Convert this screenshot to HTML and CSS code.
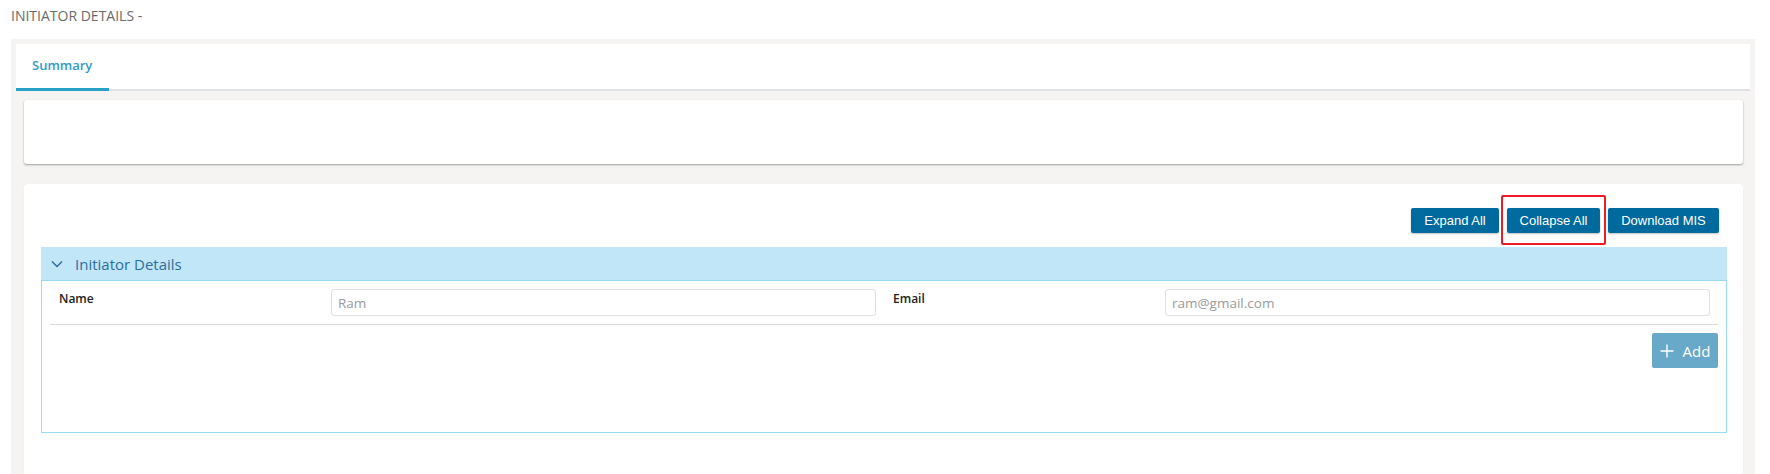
FILE: index.html
```html
<!DOCTYPE html>
<html>
<head>
<meta charset="utf-8">
<link rel="stylesheet" href="styles.css">
</head>
<body>
<div class="page">
  <div class="page-title">INITIATOR DETAILS -</div>
  <div class="panel">
    <div class="tabs">
      <div class="tab active">Summary</div>
    </div>
    <div class="panel-body">
      <div class="card card-summary"></div>
      <div class="card card-main">
        <div class="toolbar">
          <button class="btn btn-expand">Expand All</button>
          <span class="highlight-wrap">
            <button class="btn btn-collapse">Collapse All</button>
            <span class="highlight"></span>
          </span>
          <button class="btn btn-download">Download MIS</button>
        </div>
        <div class="accordion">
          <div class="acc-header">
            <svg class="chevron" width="12" height="8" viewBox="0 0 12 8"><path d="M1 1.5 L6 6.5 L11 1.5" fill="none" stroke="#2d6e9b" stroke-width="1.5"/></svg>
            <span>Initiator Details</span>
          </div>
          <div class="acc-body">
            <div class="form-row">
              <div class="field">
                <label class="lbl">Name</label>
                <input class="inp" type="text" placeholder="Ram">
              </div>
              <div class="field">
                <label class="lbl">Email</label>
                <input class="inp" type="text" placeholder="ram@gmail.com">
              </div>
            </div>
            <div class="add-row">
              <button class="btn-add"><svg width="14" height="14" viewBox="0 0 14 14"><path d="M7 0.5 V13.5 M0.5 7 H13.5" stroke="#fff" stroke-width="1.4"/></svg><span>Add</span></button>
            </div>
          </div>
        </div>
      </div>
    </div>
  </div>
</div>
</body>
</html>
```
FILE: styles.css
```css
html, body {
  margin: 0;
  padding: 0;
  background: #ffffff;
  overflow: hidden;
}
body {
  font-family: "Open Sans", "Noto Sans", sans-serif;
}
.page {
  padding: 0 15px 0 11px;
}
.page-title {
  height: 39px;
  padding-top: 6px;
  box-sizing: border-box;
  font-size: 14px;
  color: #6a6a6a;
}
.panel {
  background: #f5f4f2;
  padding: 5px 5px 0 5px;
}
.tabs {
  background: #fff;
  height: 47px;
  border-bottom: 2px solid #dfe1e6;
  box-sizing: border-box;
  display: flex;
}
.tab {
  width: 93px;
  height: 47px;
  box-sizing: border-box;
  padding-left: 16px;
  padding-top: 12px;
  font-size: 13px;
  font-weight: 600;
  color: #3399c9;
  border-bottom: 3px solid #27a1c6;
  margin-bottom: -2px;
}
.panel-body {
  padding: 9px 7px 0 8px;
}
.card {
  background: #fff;
  border-radius: 3px;
  box-shadow: 0 1px 2px rgba(0,0,0,0.35);
}
.card-summary {
  height: 64px;
  margin-bottom: 20px;
}
.card-main {
  padding: 24px 16px 60px 17px;
  box-shadow: 0 0 1px rgba(0,0,0,0.1);
}
.toolbar {
  display: flex;
  justify-content: flex-end;
  gap: 8px;
  padding-right: 8px;
  margin-bottom: 14px;
}
.btn {
  height: 25px;
  background: #006a9e;
  color: #fff;
  border: none;
  border-radius: 2px;
  font-family: "Liberation Sans", Arial, sans-serif;
  font-size: 13px;
  padding: 0;
  box-shadow: 0 1px 2px rgba(0,0,0,0.25);
}
.btn-expand { width: 88px; }
.btn-collapse { width: 93px; }
.btn-download { width: 111px; }
.highlight-wrap {
  position: relative;
  display: inline-flex;
}
.highlight {
  position: absolute;
  left: -6px;
  top: -13px;
  width: 105px;
  height: 50px;
  box-sizing: border-box;
  border: 2px solid #ee1c25;
  border-radius: 2px;
}
.acc-header {
  height: 33px;
  background: #c1e6f7;
  display: flex;
  align-items: center;
  padding-left: 10px;
  font-size: 15px;
  color: #2d6e9b;
}
.chevron {
  margin-right: 12px;
  margin-top: 1px;
}
.acc-body {
  border: 1px solid #9bd9f4;
  height: 153px;
  box-sizing: border-box;
  padding: 8px 8px 0 8px;
}
.form-row {
  display: flex;
  padding-bottom: 8px;
  border-bottom: 1px solid #dcdcdc;
}
.field {
  flex: 1;
  display: grid;
  grid-template-columns: 272px 545px;
  align-items: start;
  padding: 0 8px 0 9px;
}
.lbl {
  font-size: 12px;
  font-weight: 600;
  color: #222;
  padding-top: 1px;
}
.inp {
  width: 100%;
  height: 27px;
  box-sizing: border-box;
  border: 1px solid #e0e0e0;
  border-radius: 3px;
  padding: 0 6px;
  font-family: "Open Sans", "Noto Sans", sans-serif;
  font-size: 13.5px;
  color: #333;
  outline: none;
}
.inp::placeholder {
  color: #9a9a9a;
}
.add-row {
  display: flex;
  justify-content: flex-end;
  padding-top: 8px;
}
.btn-add {
  width: 66px;
  height: 35px;
  background: #68a8c8;
  border: none;
  border-radius: 2px;
  color: #fff;
  font-family: "Open Sans", "Noto Sans", sans-serif;
  font-size: 15px;
  display: flex;
  align-items: center;
  justify-content: center;
  gap: 9px;
  padding: 0;
}
```
